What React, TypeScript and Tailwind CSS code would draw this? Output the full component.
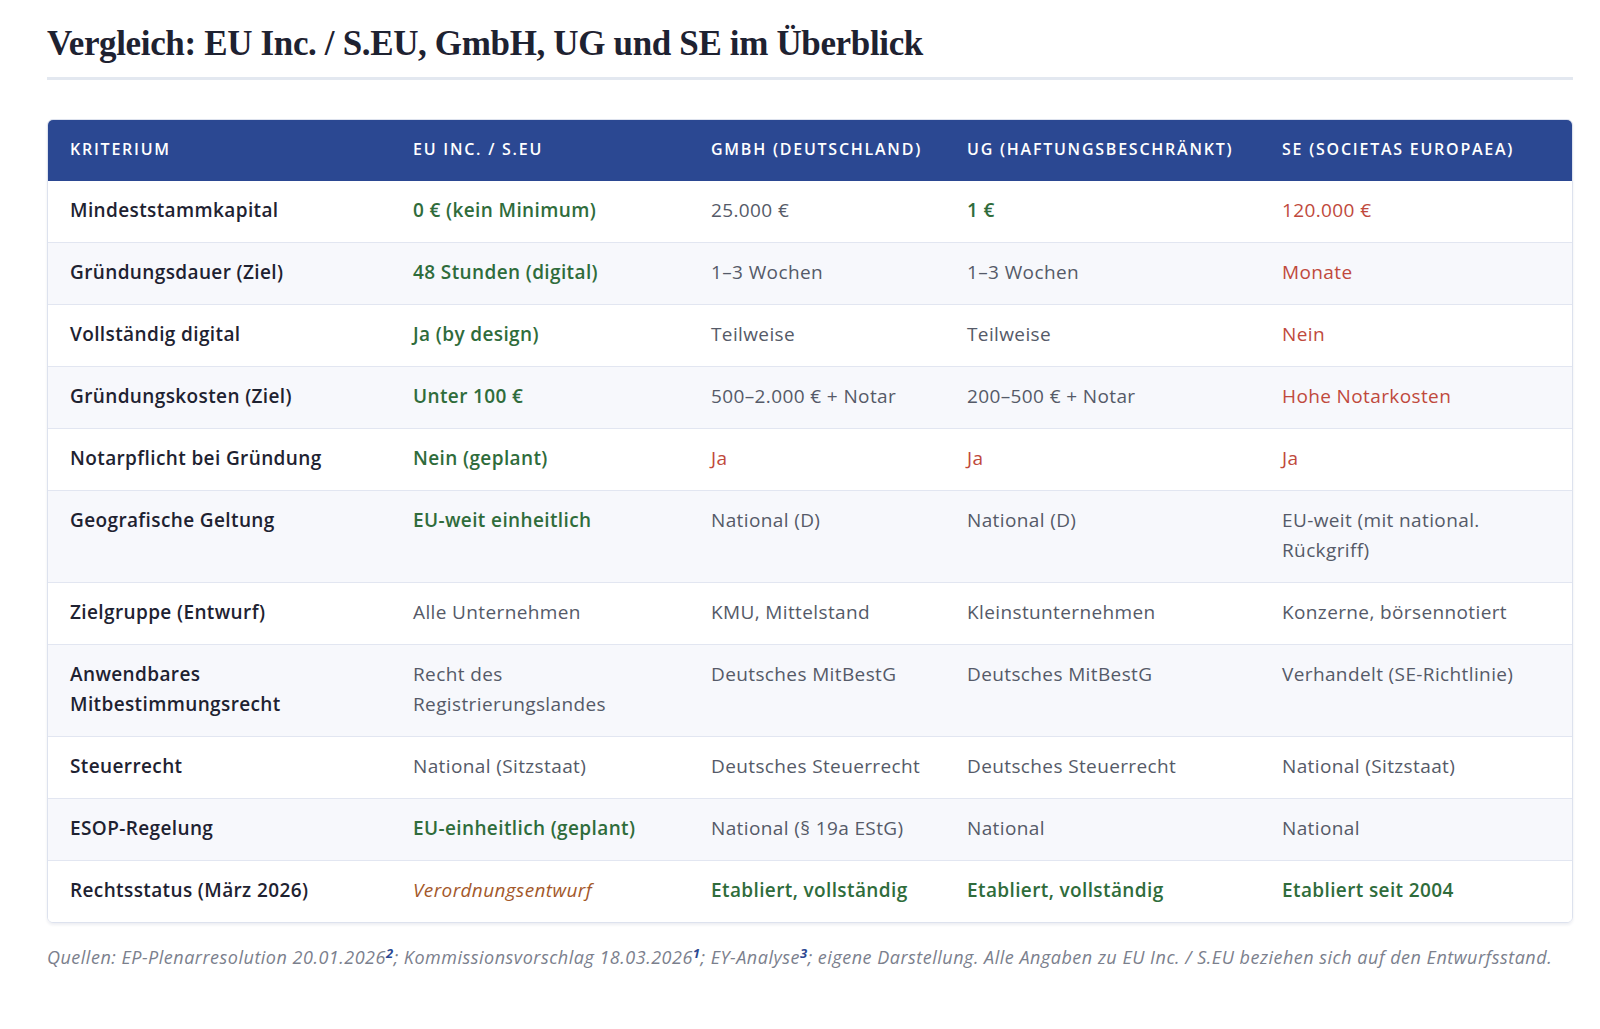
import React from "react";

type Tone = "b" | "n" | "g" | "r" | "i";
type Cell = [string, Tone];

const rows: { label: string; cells: Cell[] }[] = [
  { label: "Mindeststammkapital", cells: [["0 € (kein Minimum)", "g"], ["25.000 €", "n"], ["1 €", "g"], ["120.000 €", "r"]] },
  { label: "Gründungsdauer (Ziel)", cells: [["48 Stunden (digital)", "g"], ["1–3 Wochen", "n"], ["1–3 Wochen", "n"], ["Monate", "r"]] },
  { label: "Vollständig digital", cells: [["Ja (by design)", "g"], ["Teilweise", "n"], ["Teilweise", "n"], ["Nein", "r"]] },
  { label: "Gründungskosten (Ziel)", cells: [["Unter 100 €", "g"], ["500–2.000 € + Notar", "n"], ["200–500 € + Notar", "n"], ["Hohe Notarkosten", "r"]] },
  { label: "Notarpflicht bei Gründung", cells: [["Nein (geplant)", "g"], ["Ja", "r"], ["Ja", "r"], ["Ja", "r"]] },
  { label: "Geografische Geltung", cells: [["EU-weit einheitlich", "g"], ["National (D)", "n"], ["National (D)", "n"], ["EU-weit (mit national. Rückgriff)", "n"]] },
  { label: "Zielgruppe (Entwurf)", cells: [["Alle Unternehmen", "n"], ["KMU, Mittelstand", "n"], ["Kleinstunternehmen", "n"], ["Konzerne, börsennotiert", "n"]] },
  { label: "Anwendbares Mitbestimmungsrecht", cells: [["Recht des Registrierungslandes", "n"], ["Deutsches MitBestG", "n"], ["Deutsches MitBestG", "n"], ["Verhandelt (SE-Richtlinie)", "n"]] },
  { label: "Steuerrecht", cells: [["National (Sitzstaat)", "n"], ["Deutsches Steuerrecht", "n"], ["Deutsches Steuerrecht", "n"], ["National (Sitzstaat)", "n"]] },
  { label: "ESOP-Regelung", cells: [["EU-einheitlich (geplant)", "g"], ["National (§ 19a EStG)", "n"], ["National", "n"], ["National", "n"]] },
  { label: "Rechtsstatus (März 2026)", cells: [["Verordnungsentwurf", "i"], ["Etabliert, vollständig", "g"], ["Etabliert, vollständig", "g"], ["Etabliert seit 2004", "g"]] },
];

const toneClass: Record<Tone, string> = {
  b: "font-semibold text-[#1e2231]",
  n: "text-[#555a68]",
  g: "font-semibold text-[#2f6c3b]",
  r: "text-[#c0493c]",
  i: "italic text-[#a3582a]",
};

const headers = ["Kriterium", "EU Inc. / S.EU", "GmbH (Deutschland)", "UG (haftungsbeschränkt)", "SE (Societas Europaea)"];

export default function App() {
  return (
    <div className="min-h-[1029px] bg-white pl-[47px] pr-[27px] pt-[21px]" style={{ fontFamily: "'Open Sans', 'Noto Sans', sans-serif" }}>
      <h2
        className="text-[#1e2231] text-[35px] font-bold leading-[46px] pb-[10px] border-b-[3px] border-[#e3e8f0] tracking-[-0.01em]"
        style={{ fontFamily: "'Liberation Serif', serif" }}
      >
        Vergleich: EU Inc. / S.EU, GmbH, UG und SE im Überblick
      </h2>

      <div className="mt-[39px] rounded-[6px] border border-[#dde2ee] overflow-hidden shadow-[0_2px_3px_rgba(30,40,90,0.08)]">
        <table className="w-full table-fixed border-collapse text-[19px] leading-[30px] tracking-[0.02em]">
          <colgroup>
            <col className="w-[343px]" />
            <col className="w-[298px]" />
            <col className="w-[256px]" />
            <col className="w-[315px]" />
            <col />
          </colgroup>
          <thead>
            <tr className="bg-[#2b4892]">
              {headers.map((h) => (
                <th key={h} className="h-[61px] px-[22px] pb-[3px] text-left text-white uppercase text-[16px] font-semibold tracking-[0.11em] align-middle">
                  {h}
                </th>
              ))}
            </tr>
          </thead>
          <tbody>
            {rows.map((r, i) => (
              <tr key={r.label} className={`${i % 2 === 1 ? "bg-[#f7f8fc]" : "bg-white"} ${i > 0 ? "border-t border-[#e2e6f1]" : ""}`}>
                <td className="px-[22px] pt-[14px] pb-[17px] align-top font-semibold text-[#1e2231]">{r.label}</td>
                {r.cells.map(([t, tone], j) => (
                  <td key={j} className={`px-[22px] pt-[14px] pb-[17px] align-top ${toneClass[tone]}`}>
                    {t}
                  </td>
                ))}
              </tr>
            ))}
          </tbody>
        </table>
      </div>

      <p className="mt-[21px] text-[18px] italic text-[#7b808d] leading-[26px] tracking-[0.028em] whitespace-nowrap">
        Quellen: EP-Plenarresolution 20.01.2026<sup className="font-bold text-[#2b4892] text-[13px]">2</sup>; Kommissionsvorschlag 18.03.2026<sup className="font-bold text-[#2b4892] text-[13px]">1</sup>; EY-Analyse<sup className="font-bold text-[#2b4892] text-[13px]">3</sup>; eigene Darstellung. Alle Angaben zu EU Inc. / S.EU beziehen sich auf den Entwurfsstand.
      </p>
    </div>
  );
}
